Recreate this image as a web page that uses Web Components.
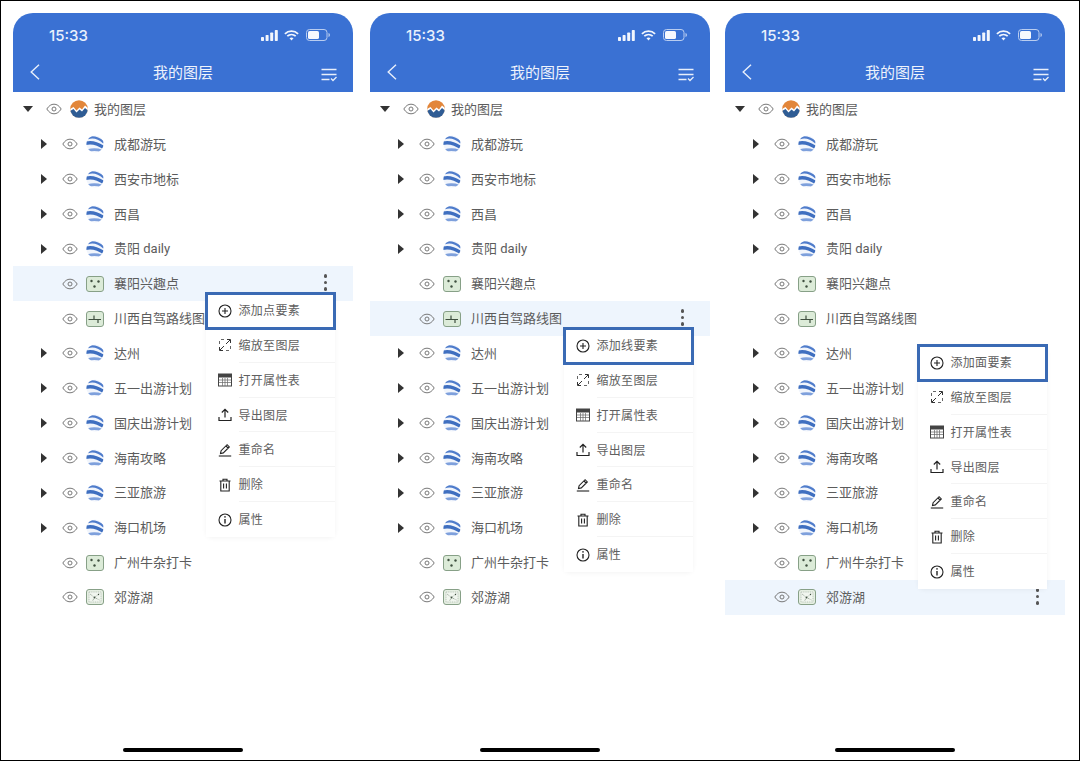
<!doctype html>
<html lang="zh">
<head>
<meta charset="utf-8">
<title>我的图层</title>
<style>
  html, body { margin: 0; background: #fff; }
  body { font-family: Roboto, "Noto Sans CJK SC", "Noto Sans", sans-serif; }
</style>
</head>
<body>
<screens-row></screens-row>
<script>
const ICONS = {
  eye: `<svg viewBox="0 0 16 12" width="16" height="12" fill="none" stroke="#777" stroke-width="1"><path d="M.8 6C3 2.6 5.3 1.2 8 1.2S13 2.6 15.2 6C13 9.4 10.7 10.8 8 10.8S3 9.4.8 6z"/><circle cx="8" cy="6" r="2"/></svg>`,
  logo: `<svg viewBox="0 0 18 18" width="18" height="18"><clipPath id="c"><circle cx="9" cy="9" r="8.8"/></clipPath><g clip-path="url(#c)"><rect width="18" height="18" fill="#e2863a"/><path d="M0 9l3.5-2 3 3.5 3-3 2.5 2L15 5.5 18 8v10H0z" fill="#fff"/><path d="M0 11l3.5-2 3 3.5 3-3 2.5 2L15 8l3 2.500V18H0z" fill="#2f5c94"/></g></svg>`,
  globe: `<svg viewBox="0 0 18 18" width="18" height="18"><clipPath id="g"><circle cx="9" cy="9" r="8.6"/></clipPath><g clip-path="url(#g)" fill="none"><rect width="18" height="18" fill="#f1f5fc"/><path d="M2 3Q10 .5 18 7.500" stroke="#4f7ccb" stroke-width="2.400"/><path d="M-1 8.500Q8 5.500 19 13.500" stroke="#3f6fc0" stroke-width="3.400"/><path d="M2 15.500Q9 13.500 16 16" stroke="#7ea0dc" stroke-width="2.600"/></g></svg>`,
  point: `<svg viewBox="0 0 18 16" width="18" height="16"><rect x=".5" y=".5" width="17" height="15" rx="2.5" fill="#dcebd8" stroke="#87a087"/><g fill="#3f4f3f"><circle cx="5.5" cy="5" r="1.2"/><circle cx="12.5" cy="5.5" r="1.2"/><circle cx="8.5" cy="10.5" r="1.2"/></g></svg>`,
  line: `<svg viewBox="0 0 18 16" width="18" height="16"><rect x=".5" y=".5" width="17" height="15" rx="2.5" fill="#dcebd8" stroke="#87a087"/><path d="M2.500 8.500H8M8 8.500V4.500M8 8.500H15M12 8.500V12" fill="none" stroke="#3f4f3f" stroke-width="1.2"/></svg>`,
  area: `<svg viewBox="0 0 18 16" width="18" height="16"><rect x=".5" y=".5" width="17" height="15" rx="2.5" fill="#e6efe3" stroke="#87a087"/><rect x="3" y="3" width="12" height="10" fill="#f1f6ef" stroke="#9aa89a" stroke-width=".6" stroke-dasharray="1 .8"/><path d="M4 5l4.500 3.500 5-4M8.500 8.500l-2 3.500M8.500 8.500l5 2.500" fill="none" stroke="#7c8c7c" stroke-width=".7" stroke-dasharray="1 .7"/><g fill="#3f4f3f"><circle cx="8.500" cy="8.500" r=".9"/><circle cx="12.500" cy="5.500" r=".7"/></g></svg>`,
  add: `<svg viewBox="0 0 14 14" width="14" height="14" fill="none" stroke="#222" stroke-width="1.1"><circle cx="7" cy="7" r="6"/><path d="M7 4v6M4 7h6"/></svg>`,
  zoom: `<svg viewBox="0 0 14 14" width="14" height="14" fill="none" stroke="#333" stroke-width="1"><path d="M6 1.500H3M1.500 3v3M8 12.500h3M12.500 11V8" stroke="#666"/><path d="M2 12L6 8M8 6l4-4"/><path d="M1.500 9v3.500H5M9 1.500h3.500V5"/></svg>`,
  table: `<svg viewBox="0 0 14 14" width="14" height="14"><rect x=".5" y="1" width="13" height="12" fill="#fff" stroke="#444"/><rect x=".5" y="1" width="13" height="3.5" fill="#444"/><path d="M1 7h12M1 9.500h12M4.500 5v8M7 5v8M9.500 5v8" stroke="#666" stroke-width=".7"/></svg>`,
  upload: `<svg viewBox="0 0 14 14" width="14" height="14" fill="none" stroke="#222" stroke-width="1.2"><path d="M7 9.500V1.500M3.800 4.500L7 1.300l3.200 3.200M1 9v3.500h12V9"/></svg>`,
  pen: `<svg viewBox="0 0 14 14" width="14" height="14" fill="none" stroke="#222" stroke-width="1.1"><path d="M2.500 10.500l.6-2.800 6-6 2.200 2.200-6 6zM8 3l2.200 2.200"/><path d="M.8 13h12.400"/></svg>`,
  trash: `<svg viewBox="0 0 14 14" width="14" height="14" fill="none" stroke="#222" stroke-width="1.1"><path d="M1.500 3h11M5 3V1.300h4V3M2.800 3v10h8.400V3M5.600 5.500v5M8.400 5.500v5"/></svg>`,
  info: `<svg viewBox="0 0 14 14" width="14" height="14" fill="none" stroke="#222" stroke-width="1.1"><circle cx="7" cy="7" r="6"/><path d="M7 6v4.500" stroke-width="1.4"/><circle cx="7" cy="3.900" r=".8" fill="#222" stroke="none"/></svg>`,
  signal: `<svg viewBox="0 0 17 11" width="17" height="11" fill="#f2f6fd"><rect x="0" y="7" width="3" height="4" rx=".7"/><rect x="4.600" y="5" width="3" height="6" rx=".7"/><rect x="9.200" y="2.500" width="3" height="8.500" rx=".7"/><rect x="13.800" y="0" width="3" height="11" rx=".7"/></svg>`,
  wifi: `<svg viewBox="0 0 15 11" width="15" height="11" fill="none" stroke="#f2f6fd" stroke-width="1.8"><path d="M.9 3.800C4.600.3 10.400.3 14.100 3.800M3.300 6.200C5.700 4 9.300 4 11.700 6.200"/><path d="M5.500 8.300c1.100-1 2.900-1 4 0L7.500 10.600z" fill="#f2f6fd" stroke="none"/></svg>`,
  battery: `<svg viewBox="0 0 24 12" width="24" height="12"><rect x=".5" y=".5" width="20.500" height="11" rx="3" fill="none" stroke="#b9cdf0"/><rect x="2" y="2" width="11" height="8" rx="1.600" fill="#f6f8fe"/><path d="M22.500 4v4c.9-.3 1.400-1.100 1.400-2s-.5-1.700-1.400-2z" fill="#b9cdf0"/></svg>`,
  back: `<svg viewBox="0 0 10 16" width="10" height="16" fill="none" stroke="#e8effb" stroke-width="1.4"><path d="M9 .7L1.200 8 9 15.300"/></svg>`,
  checklist: `<svg viewBox="0 0 16 14" width="16" height="14" fill="none" stroke="#e8effb" stroke-width="1.3"><path d="M.5 1.500h15M.5 6.500h15M.5 11.500h8M10 10.500l2 2 3.500-3.500"/></svg>`
}

class AppIcon extends HTMLElement {
  constructor() {
    super()
    this.shadow = this.attachShadow({mode: 'open'})
  }

  connectedCallback() {
    this.shadow.innerHTML = `
      <style>
        :host { display: inline-flex; align-items: center; justify-content: center; flex: none; }
        svg { display: block; }
      </style>
      ${ICONS[this.getAttribute('name')]}
    `
  }
}

class StatusBar extends HTMLElement {
  constructor() {
    super()
    this.shadow = this.attachShadow({mode: 'open'})
    this.shadow.innerHTML = `
      <style>
        :host {
          display: flex;
          align-items: center;
          height: 44px;
          padding: 0 23px 0 36px;
          color: #e9f0fc;
          font: 500 15px Inter, Roboto, sans-serif;
        }
        .time { flex: 1; }
        .icons { display: flex; align-items: center; gap: 7px; }
        .signal { margin-right: -1px; }
      </style>
      <span class="time"><slot></slot></span>
      <div class="icons">
        <app-icon class="signal" name="signal"></app-icon>
        <app-icon name="wifi"></app-icon>
        <app-icon name="battery"></app-icon>
      </div>
    `
  }
}

class NavBar extends HTMLElement {
  constructor() {
    super()
    this.shadow = this.attachShadow({mode: 'open'})
    this.shadow.innerHTML = `
      <style>
        :host {
          display: grid;
          grid-template-columns: 60px 1fr 60px;
          align-items: center;
          height: 35px;
          color: #eef3fc;
          font-size: 15px;
        }
        .title { text-align: center; padding-bottom: 7px; }
        .back { justify-self: start; margin: 0 0 5px 17px; }
        .done { justify-self: end; margin: 1px 16px 0 0; }
      </style>
      <app-icon class="back" name="back"></app-icon>
      <span class="title"><slot></slot></span>
      <app-icon class="done" name="checklist"></app-icon>
    `
  }
}

class LayerRow extends HTMLElement {
  constructor() {
    super()
    this.shadow = this.attachShadow({mode: 'open'})
  }

  connectedCallback() {
    const open = this.hasAttribute('open')
    const root = this.hasAttribute('root')
    const arrow = this.hasAttribute('arrow') || root
    this.shadow.innerHTML = `
      <style>
        :host {
          display: flex;
          align-items: center;
          height: 34.87px;
          padding-left: ${root ? 9 : 25}px;
          color: #5c5c5c;
          font-size: 13px;
          position: relative;
        }
        :host([active]) { background: #eef5fd; }
        .tri { width: 12px; height: 12px; flex: none; display: flex; align-items: center; justify-content: center; }
        .down { width: 0; height: 0; border: 5px solid transparent; border-top: 6px solid #333; border-bottom: 0; }
        .right { width: 0; height: 0; border: 5px solid transparent; border-left: 6px solid #333; border-right: 0; }
        .eye { margin: 0 8px 0 12px; }
        .label { margin-left: ${root ? 6 : 10}px; padding-bottom: 2px; white-space: nowrap; }
        .dots { position: absolute; right: 26px; top: 8px; display: grid; gap: 3px; }
        .dots i { width: 3.5px; height: 3.5px; border-radius: 50%; background: #555; }
      </style>
      <span class="tri">${arrow ? `<i class="${open ? 'down' : 'right'}"></i>` : ''}</span>
      <app-icon class="eye" name="eye"></app-icon>
      <app-icon name="${this.getAttribute('icon')}"></app-icon>
      <span class="label"><slot></slot></span>
      ${this.hasAttribute('active') ? '<span class="dots"><i></i><i></i><i></i></span>' : ''}
    `
  }
}

class MenuItem extends HTMLElement {
  constructor() {
    super()
    this.shadow = this.attachShadow({mode: 'open'})
  }

  connectedCallback() {
    this.shadow.innerHTML = `
      <style>
        :host {
          display: flex;
          align-items: center;
          box-sizing: border-box;
          height: 34.87px;
          padding-left: 12px;
          color: #606060;
          font-size: 12px;
          letter-spacing: .3px;
          background: #fff;
          position: relative;
        }
        :host(:not(:last-child))::after {
          content: '';
          position: absolute;
          left: 33px;
          right: 0;
          bottom: 0;
          height: 1px;
          background: #f4f4f4;
        }
        :host([marked]) {
          height: 38px;
          margin: -1.5px -1px -1.63px;
          padding-left: 10px;
          border: 3px solid #3a6ab4;
          z-index: 1;
        }
        :host([marked])::after { display: none; }
        .text { margin-left: 6.5px; padding-bottom: 2px; white-space: nowrap; }
      </style>
      <app-icon name="${this.getAttribute('icon')}"></app-icon>
      <span class="text"><slot></slot></span>
    `
  }
}

class ContextMenu extends HTMLElement {
  constructor() {
    super()
    this.shadow = this.attachShadow({mode: 'open'})
  }

  connectedCallback() {
    const items = [
      ['add', this.getAttribute('first')],
      ['zoom', '缩放至图层'],
      ['table', '打开属性表'],
      ['upload', '导出图层'],
      ['pen', '重命名'],
      ['trash', '删除'],
      ['info', '属性']
    ]
    this.shadow.innerHTML = `
      <style>
        :host {
          display: block;
          position: absolute;
          left: var(--left);
          top: var(--top);
          width: 129px;
          background: #fff;
          border-radius: 6px;
          box-shadow: 0 1px 5px rgba(0, 0, 0, .05);
          z-index: 2;
        }
      </style>
      ${items.map(([icon, text], i) => `<menu-item icon="${icon}" ${i == 0 ? 'marked' : ''}>${text}</menu-item>`).join('')}
    `
  }
}

class PhoneScreen extends HTMLElement {
  constructor() {
    super()
    this.shadow = this.attachShadow({mode: 'open'})
  }

  connectedCallback() {
    const active = this.getAttribute('active')
    const layers = [
      ['globe', '成都游玩', 1],
      ['globe', '西安市地标', 1],
      ['globe', '西昌', 1],
      ['globe', '贵阳 daily', 1],
      ['point', '襄阳兴趣点', 0],
      ['line', '川西自驾路线图', 0],
      ['globe', '达州', 1],
      ['globe', '五一出游计划', 1],
      ['globe', '国庆出游计划', 1],
      ['globe', '海南攻略', 1],
      ['globe', '三亚旅游', 1],
      ['globe', '海口机场', 1],
      ['point', '广州牛杂打卡', 0],
      ['area', '郊游湖', 0]
    ]
    this.shadow.innerHTML = `
      <style>
        :host {
          display: flex;
          flex-direction: column;
          position: relative;
          width: 340px;
          height: 747px;
        }
        header {
          background: #3a71d3;
          border-radius: 20px 20px 0 0;
          height: 79px;
        }
        .home {
          position: absolute;
          left: 110px;
          bottom: 8px;
          width: 120px;
          height: 4px;
          border-radius: 2px;
          background: #000;
        }
      </style>
      <header>
        <status-bar>15:33</status-bar>
        <nav-bar>我的图层</nav-bar>
      </header>
      <section>
        <layer-row root open icon="logo">我的图层</layer-row>
        ${layers.map(([icon, name, arrow]) => `
          <layer-row icon="${icon}" ${arrow ? 'arrow' : ''} ${name == active ? 'active' : ''}>${name}</layer-row>
        `).join('')}
      </section>
      <context-menu first="${this.getAttribute('first')}"
        style="--left:${this.getAttribute('menu-x')}px;--top:${this.getAttribute('menu-y')}px"></context-menu>
      <div class="home"></div>
    `
  }
}

class ScreensRow extends HTMLElement {
  constructor() {
    super()
    this.shadow = this.attachShadow({mode: 'open'})
    this.shadow.innerHTML = `
      <style>
        :host {
          display: grid;
          grid-template-columns: 357px 355px 340px;
          box-sizing: border-box;
          height: 761px;
          padding: 12px 0 0 12px;
          border: 1px solid #000;
          overflow: hidden;
        }
      </style>
      <phone-screen active="襄阳兴趣点" first="添加点要素" menu-x="193" menu-y="280"></phone-screen>
      <phone-screen active="川西自驾路线图" first="添加线要素" menu-x="194" menu-y="315"></phone-screen>
      <phone-screen active="郊游湖" first="添加面要素" menu-x="193" menu-y="332"></phone-screen>
    `
  }
}

customElements.define('app-icon', AppIcon)
customElements.define('status-bar', StatusBar)
customElements.define('nav-bar', NavBar)
customElements.define('layer-row', LayerRow)
customElements.define('menu-item', MenuItem)
customElements.define('context-menu', ContextMenu)
customElements.define('phone-screen', PhoneScreen)
customElements.define('screens-row', ScreensRow)
</script>
</body>
</html>
